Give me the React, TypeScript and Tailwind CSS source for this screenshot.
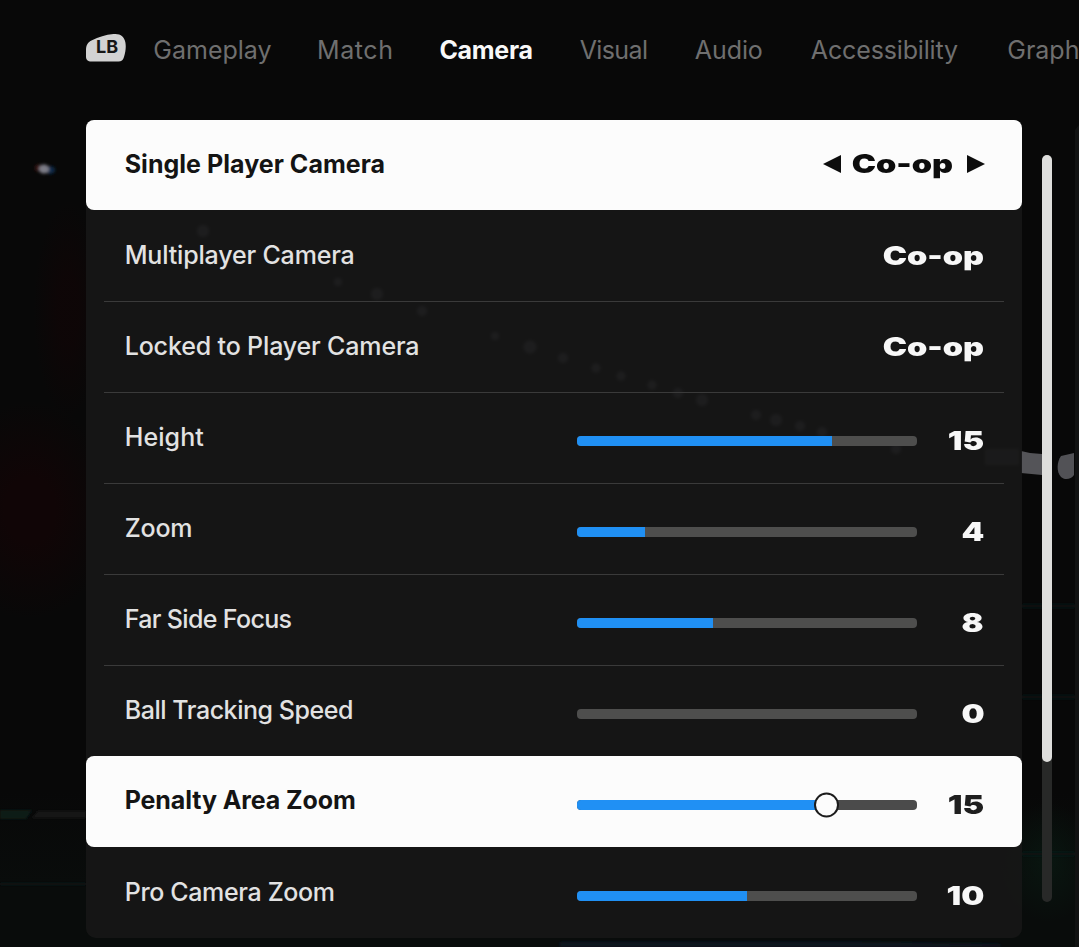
import clsx from "clsx";

type Setting = {
  label: string;
  tracking?: string;
  option?: string;
  value?: number;
  selected?: boolean;
  thumb?: boolean;
};

const MAX_VALUE = 20;

const tabs = [
  { name: "Gameplay", className: "w-[163.7px]" },
  { name: "Match", className: "w-[122.4px] tracking-[0.6px]" },
  { name: "Camera", className: "w-[140.3px] tracking-[-0.3px]", active: true },
  { name: "Visual", className: "w-[115.2px] tracking-[-0.6px]" },
  { name: "Audio", className: "w-[116px] tracking-[-0.1px]" },
  { name: "Accessibility", className: "w-[196.4px] tracking-[-0.15px]" },
  { name: "Graphics", className: "w-[120px]" },
];

const settings: Setting[] = [
  { label: "Single Player Camera", tracking: "tracking-[0.03px]", option: "Co-op", selected: true },
  { label: "Multiplayer Camera", tracking: "tracking-[-0.17px]", option: "Co-op" },
  { label: "Locked to Player Camera", tracking: "tracking-[-0.15px]", option: "Co-op" },
  { label: "Height", tracking: "tracking-[0.1px]", value: 15 },
  { label: "Zoom", tracking: "tracking-[-0.2px]", value: 4 },
  { label: "Far Side Focus", tracking: "tracking-[-0.65px]", value: 8 },
  { label: "Ball Tracking Speed", tracking: "tracking-[-0.45px]", value: 0 },
  { label: "Penalty Area Zoom", tracking: "tracking-[-0.1px]", value: 15, selected: true, thumb: true },
  { label: "Pro Camera Zoom", tracking: "tracking-[-0.35px]", value: 10 },
];

// x, y, radius of the stand lights that shine through the panel
const lights = [
  [203, 231, 6],
  [338, 282, 4],
  [377, 294, 6],
  [422, 311, 5],
  [495, 336, 4],
  [530, 347, 6.5],
  [563, 358, 5],
  [596, 368, 4.5],
  [621, 376, 4.5],
  [652, 385, 4.5],
  [678, 393, 5],
  [702, 400, 6],
  [756, 415, 5],
  [776, 420, 6],
  [800, 426, 5],
  [822, 432, 5],
  [896, 449, 5],
];

function Stadium() {
  return (
    <svg
      className="pointer-events-none absolute inset-0"
      width="1079"
      height="947"
      viewBox="0 0 1079 947"
      aria-hidden="true"
    >
      <defs>
        <filter id="soft" x="-50%" y="-50%" width="200%" height="200%">
          <feGaussianBlur stdDeviation="1.6" />
        </filter>
        <radialGradient id="red">
          <stop offset="0.3" stopColor="#100506" />
          <stop offset="1" stopColor="#100506" stopOpacity="0" />
        </radialGradient>
        <radialGradient id="green">
          <stop offset="0" stopColor="#091610" />
          <stop offset="1" stopColor="#091610" stopOpacity="0" />
        </radialGradient>
        <linearGradient id="pitch" x1="0" y1="0" x2="0" y2="1">
          <stop offset="0" stopColor="#090c0b" stopOpacity="0" />
          <stop offset="0.6" stopColor="#090c0b" />
        </linearGradient>
      </defs>
      <ellipse cx="30" cy="510" rx="85" ry="110" fill="url(#red)" />
      <ellipse cx="68" cy="310" rx="35" ry="110" fill="url(#red)" opacity="0.7" />
      <rect y="790" width="1079" height="157" fill="url(#pitch)" />
      <ellipse cx="1048" cy="862" rx="48" ry="60" fill="url(#green)" />
      <g filter="url(#soft)">
        <ellipse cx="39" cy="168" rx="4" ry="3.5" fill="#3a1712" />
        <ellipse cx="50" cy="170" rx="5" ry="4" fill="#10294a" />
        <ellipse cx="44" cy="169" rx="5" ry="4.5" fill="#7c7b86" />
        {lights.map(([x, y, r]) => (
          <circle key={x} cx={x} cy={y} r={r} fill="#6b6b74" />
        ))}
        <rect x="985" y="449" width="34" height="16" fill="#4a4a50" />
        <path d="M0 810h32l-6 9H0z" fill="#0a1f17" />
        <path d="M38 811h48v7H32z" fill="#121314" />
        <path d="M0 884h86" stroke="#111517" strokeWidth="2" />
        <path d="M1022 606h53M1022 697h53M1022 854h53" stroke="#0c1714" strokeWidth="3" />
        <path d="M560 942h300l140 2v3H560z" fill="#111720" />
      </g>
      <path d="M1021 451l9 2 12 1v21l-21-2z" fill="#545458" />
      <path d="M1061 456l13-3v22c-3 5-10 5-13 2-5-5-4-16 0-21z" fill="#525256" />
      <path d="M1075 130v817h4V125z" fill="#111212" />
    </svg>
  );
}

function BumperIcon() {
  return (
    <div className="relative flex h-[29px] w-10 items-center justify-center">
      <svg className="absolute inset-0" width="40" height="29" viewBox="0 0 40 29" fill="#d2d2d2">
        <path d="M0 17.5C0 12.500 1.500 9.300 6 7.300 12.500 4.200 19.500 1.900 27.500 1.100 34.500.4 38.300 3.700 39.400 9.500c.8 4.300.2 9.500-1.500 14.800-.9 2.900-2.500 4.200-5.400 4.200H5.500C1.700 28.500 0 27 0 23.500z" />
      </svg>
      <span className="relative pl-[2px] text-[18px] leading-none font-bold text-[#161616]">LB</span>
    </div>
  );
}

function OptionPicker({ option, selected }: { option: string; selected?: boolean }) {
  const text = (
    <span
      className={clsx(
        "origin-right scale-x-[1.25] text-[26px] leading-none font-black",
        selected ? "text-[#0d0d0d]" : "text-[#f7f7f7]",
      )}
    >
      {option}
    </span>
  );

  if (!selected) return <div className="flex pb-px">{text}</div>;

  return (
    <div className="-mr-px flex items-center pb-[2px]">
      <svg className="mr-[31px]" width="18" height="18" viewBox="0 0 18 18" fill="#0d0d0d">
        <path d="M18 0v18L0 9z" />
      </svg>
      {text}
      <svg className="ml-[14px]" width="18" height="18" viewBox="0 0 18 18" fill="#0d0d0d">
        <path d="M0 0v18l18-9z" />
      </svg>
    </div>
  );
}

function Slider({ value, selected, thumb }: { value: number; selected?: boolean; thumb?: boolean }) {
  return (
    <div className={clsx("flex items-center", selected ? "pt-[7px]" : "pt-[6px]")}>
      <div className="relative h-[10px] w-[340px]">
        <div className={clsx("h-full overflow-hidden rounded-[4px]", selected ? "bg-[#4b4b4b]" : "bg-[#4e4e4d]")}>
          <div className="h-full bg-[#2090f4]" style={{ width: `${(value / MAX_VALUE) * 100}%` }} />
        </div>
        {thumb && (
          <div className="absolute top-1/2 left-[237px] size-[25px] -translate-y-1/2 rounded-full border-[2.5px] border-[#1c1c1c] bg-[#fcfcfc]" />
        )}
      </div>
      <div className="flex w-[67px] justify-end">
        <span
          className={clsx(
            "origin-right scale-x-[1.25] text-[26px] leading-none font-black",
            selected ? "text-[#1f1f1f]" : "text-[#f7f7f7]",
          )}
        >
          {value}
        </span>
      </div>
    </div>
  );
}

function SettingRow({ setting, divided }: { setting: Setting; divided: boolean }) {
  const { label, tracking, option, value, selected, thumb } = setting;
  return (
    <div className={clsx("h-[90.9px]", selected ? "rounded-[8px] bg-[#fcfcfc]" : "px-[18px]")}>
      <div
        className={clsx(
          "flex h-full items-center justify-between",
          selected ? "pr-[38px] pl-[38.7px]" : "border-t pr-[20px] pl-[20.7px]",
          !selected && (divided ? "border-[#3a3a3a]" : "border-transparent"),
        )}
      >
        <span
          className={clsx(
            "pb-px text-[25px] leading-none whitespace-nowrap",
            tracking,
            selected ? "font-bold text-[#141414]" : "font-medium text-[#e2e2e2]",
          )}
        >
          {label}
        </span>
        {option !== undefined && <OptionPicker option={option} selected={selected} />}
        {value !== undefined && <Slider value={value} selected={selected} thumb={thumb} />}
      </div>
    </div>
  );
}

export default function App() {
  return (
    <div className="relative h-[947px] w-[1079px] overflow-hidden bg-[#080808] font-['Inter',sans-serif]">
      <Stadium />
      <div className="relative flex h-full flex-col">
        <nav className="flex h-[119.5px] shrink-0 items-center pb-[19.5px] pl-[86px]">
          <div className="mr-[27.3px] -mt-[6px]">
            <BumperIcon />
          </div>
          {tabs.map((tab) => (
            <span
              key={tab.name}
              className={clsx(
                "shrink-0 text-[25px] leading-none",
                tab.className,
                tab.active ? "font-bold text-[#f8f8f8]" : "text-[#6f6f6f]",
              )}
            >
              {tab.name}
            </span>
          ))}
        </nav>

        <div className="flex items-start pl-[86px]">
          <div className="w-[936px] rounded-[10px] bg-[#171717]/92">
            {settings.map((setting, i) => (
              <SettingRow
                key={setting.label}
                setting={setting}
                divided={i > 0 && !setting.selected && !settings[i - 1].selected}
              />
            ))}
          </div>
          <div className="mt-[35.5px] ml-5 h-[747px] w-[10px] rounded-full bg-[#282928]">
            <div className="h-[607px] rounded-full bg-[#dededc]" />
          </div>
        </div>
      </div>
    </div>
  );
}
